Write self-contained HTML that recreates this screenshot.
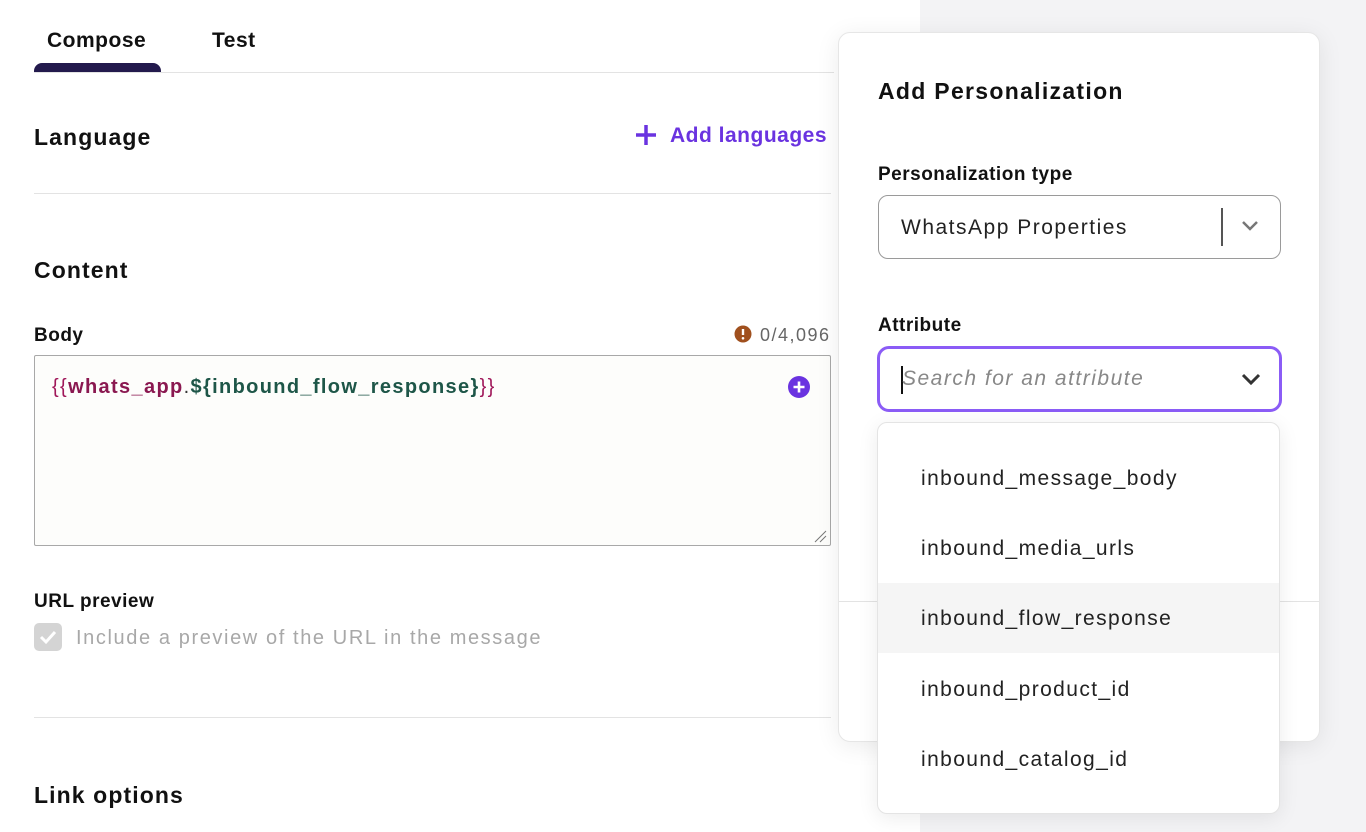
<!DOCTYPE html>
<html><head><style>
*{box-sizing:border-box;margin:0;padding:0}
body{width:1366px;height:832px;overflow:hidden;background:#fff;font-family:"Liberation Sans",sans-serif;color:#111;position:relative}
.right{position:absolute;left:920px;top:0;width:446px;height:832px;background:#f3f3f5}
.abs{position:absolute;white-space:nowrap}
.t{margin-top:2px}
.h{font-weight:bold;font-size:23px;letter-spacing:1.1px}
.line{position:absolute;height:1px;background:#e3e3e3}
.pop{position:absolute;left:838px;top:32px;width:482px;height:710px;background:#fff;border-radius:12px;border:1px solid #e6e6e6;box-shadow:0 4px 24px rgba(0,0,0,.08)}
.list{position:absolute;left:877px;top:422px;width:403px;height:392px;background:#fff;border:1px solid #e4e4e4;border-radius:10px;box-shadow:0 4px 20px rgba(0,0,0,.08)}
.item{position:absolute;left:0;width:401px;height:70px;padding-left:43px;line-height:72px;font-size:21px;color:#222;letter-spacing:1.4px}
</style></head><body>
<div class="right"></div>
<div class="abs t" style="left:47px;top:27px;font-size:21px;font-weight:bold;letter-spacing:.5px">Compose</div>
<div class="abs t" style="left:212px;top:27px;font-size:21px;font-weight:bold;letter-spacing:.5px">Test</div>
<div class="abs" style="left:34px;top:63px;width:127px;height:10px;background:#231a4d;border-radius:8px 8px 0 0"></div>
<div class="line" style="left:34px;top:72px;width:800px"></div>
<div class="abs h t" style="left:34px;top:122px">Language</div>
<svg class="abs" style="left:634px;top:123px" width="24" height="24"><path d="M12 2v20M2 12h20" stroke="#6a33e0" stroke-width="3.5"/></svg>
<div class="abs t" style="left:670px;top:122px;font-size:21px;font-weight:bold;color:#6a33e0;letter-spacing:.5px">Add languages</div>
<div class="line" style="left:34px;top:193px;width:797px"></div>
<div class="abs h t" style="left:34px;top:255px">Content</div>
<div class="abs t" style="left:34px;top:323px;font-size:19px;font-weight:bold;letter-spacing:.5px">Body</div>
<svg class="abs" style="left:734px;top:325px" width="18" height="18"><circle cx="9" cy="9" r="8.5" fill="#a0501e"/><path d="M9 4v6" stroke="#fff" stroke-width="2.4"/><circle cx="9" cy="13.3" r="1.3" fill="#fff"/></svg>
<div class="abs t" style="left:760px;top:323px;font-size:18px;color:#666;letter-spacing:1.5px">0/4,096</div>
<div class="abs" style="left:34px;top:355px;width:797px;height:191px;border:1px solid #a8a8a8;background:#fdfdfb;border-radius:2px"></div>
<div class="abs t" style="left:52px;top:374px;font-size:20px;font-weight:bold;letter-spacing:1.35px"><span style="color:#a0185a;font-weight:normal">{{</span><span style="color:#8a1850">whats_app</span><span style="color:#333;font-weight:normal">.</span><span style="color:#1e5648">${inbound_flow_response}</span><span style="color:#a0185a;font-weight:normal">}}</span></div>
<svg class="abs" style="left:788px;top:376px" width="22" height="22"><circle cx="11" cy="11" r="11" fill="#6a33e0"/><path d="M11 5.5v11M5.5 11h11" stroke="#fff" stroke-width="2.6"/></svg>
<svg class="abs" style="left:813px;top:529px" width="14" height="14"><path d="M2 13L13 2M7 13L13 7" stroke="#777" stroke-width="1"/></svg>
<div class="abs t" style="left:34px;top:589px;font-size:19px;font-weight:bold;letter-spacing:.5px">URL preview</div>
<div class="abs" style="left:34px;top:623px;width:28px;height:28px;background:#d4d4d4;border-radius:5px"></div>
<svg class="abs" style="left:38px;top:627px" width="20" height="20"><path d="M3 10l5 5 9-10" stroke="#fff" stroke-width="3" fill="none"/></svg>
<div class="abs t" style="left:76px;top:625px;font-size:20px;color:#a8a8a8;letter-spacing:1.6px">Include a preview of the URL in the message</div>
<div class="line" style="left:34px;top:717px;width:797px"></div>
<div class="abs h t" style="left:34px;top:780px">Link options</div>

<div class="pop">
<div class="abs h t" style="left:39px;top:43px;letter-spacing:1.3px">Add Personalization</div>
<div class="abs t" style="left:39px;top:129px;font-size:19px;font-weight:bold;letter-spacing:.5px">Personalization type</div>
<div class="abs" style="left:39px;top:162px;width:403px;height:64px;border:1px solid #9a9a9a;border-radius:10px"></div>
<div class="abs t" style="left:62px;top:181px;font-size:21px;color:#222;letter-spacing:1.5px">WhatsApp Properties</div>
<div class="abs" style="left:382px;top:175px;width:2px;height:38px;background:#555"></div>
<svg class="abs" style="left:401px;top:186px" width="20" height="14"><path d="M3 3l7 7 7-7" stroke="#777" stroke-width="2.5" fill="none"/></svg>
<div class="abs t" style="left:39px;top:280px;font-size:19px;font-weight:bold;letter-spacing:.5px">Attribute</div>
<div class="abs" style="left:38px;top:313px;width:405px;height:66px;border:3px solid #8b5cf6;border-radius:12px"></div>
<div class="abs" style="left:62px;top:333px;width:2px;height:28px;background:#111"></div>
<div class="abs t" style="left:63px;top:332px;font-size:21px;font-style:italic;color:#888;letter-spacing:1.5px">Search for an attribute</div>
<svg class="abs" style="left:401px;top:339px" width="22" height="14"><path d="M3 3l8 8 8-8" stroke="#333" stroke-width="3" fill="none"/></svg>
<div class="line" style="left:0;top:568px;width:480px"></div>
</div>
<div class="list">
<div class="item" style="top:20px">inbound_message_body</div>
<div class="item" style="top:90px">inbound_media_urls</div>
<div class="item" style="top:160px;background:#f5f5f5">inbound_flow_response</div>
<div class="item" style="top:231px">inbound_product_id</div>
<div class="item" style="top:301px">inbound_catalog_id</div>
</div>
</body></html>
